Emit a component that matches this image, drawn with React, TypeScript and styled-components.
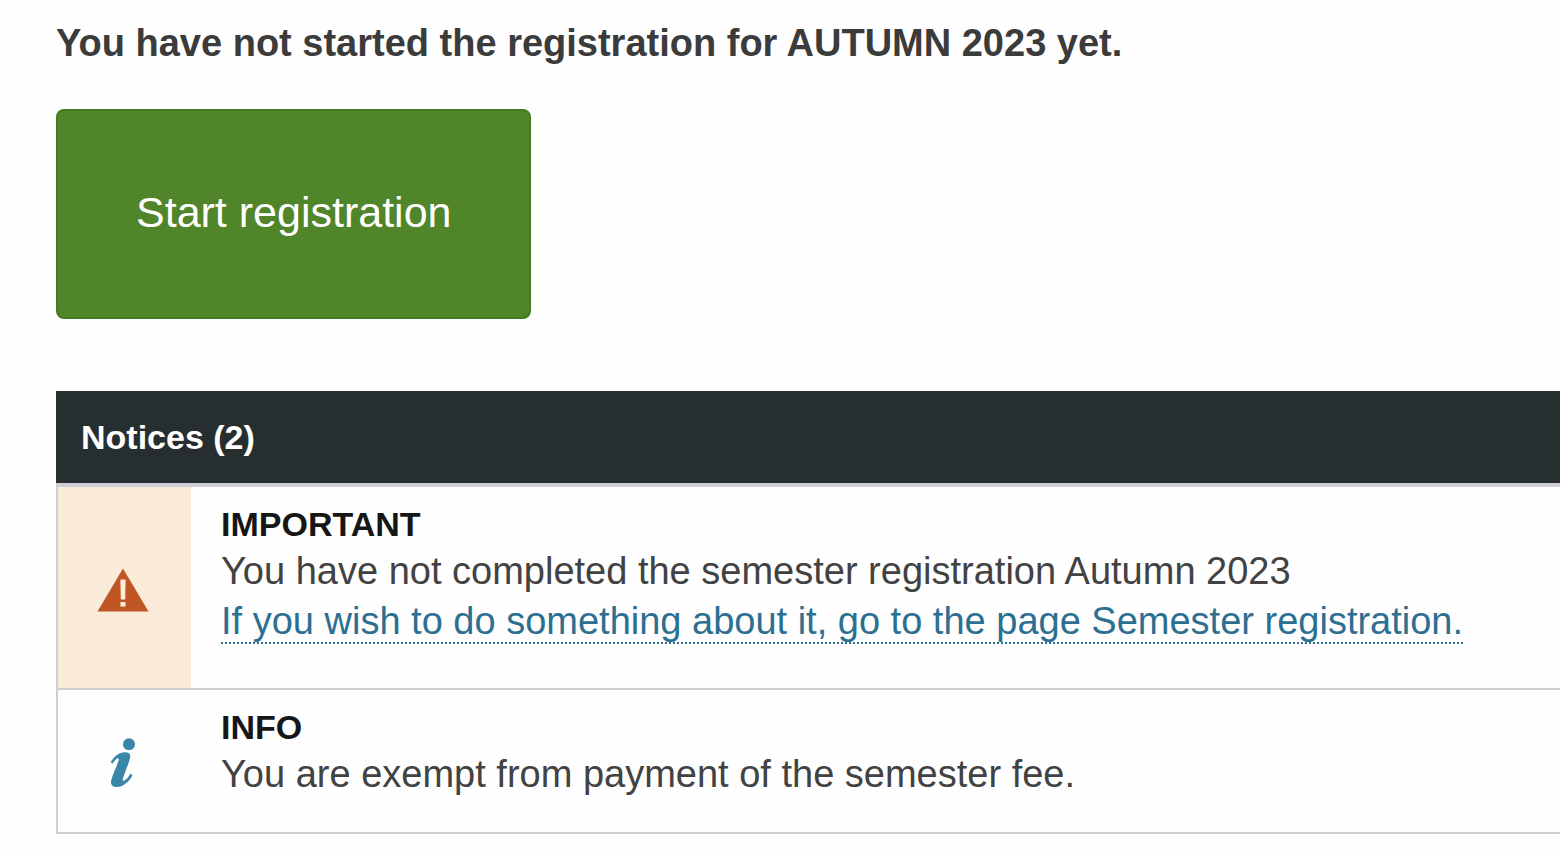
import React from "react";
import styled, { createGlobalStyle } from "styled-components";

const GlobalStyle = createGlobalStyle`
  *, *::before, *::after { box-sizing: border-box; }
  body {
    margin: 0;
    background: #fefefe;
    color: #424243;
    font-family: "Liberation Sans", Arial, sans-serif;
  }
`;

const Page = styled.main`
  padding: 18px 0 16px 56px;
`;

const Status = styled.h1`
  margin: 0 0 41px;
  font-size: 38px;
  line-height: 50px;
  font-weight: 700;
  color: #3b3b3c;
`;

const StartButton = styled.button`
  display: block;
  margin: 0 0 72px;
  padding: 76px 78px 80px;
  border: 2px solid #437b20;
  border-radius: 8px;
  background: #50852a;
  color: #ffffff;
  font-family: inherit;
  font-size: 43px;
  line-height: 50px;
  cursor: pointer;
`;

const NoticesTitle = styled.h2`
  margin: 0;
  padding: 21px 25px;
  background: #272e30;
  color: #ffffff;
  font-size: 34px;
  line-height: 50px;
  font-weight: 700;
`;

const NoticeList = styled.ul`
  margin: 0;
  padding: 0;
  list-style: none;
  border-top: 4px solid #cdced6;
  border-left: 2px solid #cdced6;
`;

const Notice = styled.li`
  display: flex;
  border-bottom: 2px solid #cdced6;
`;

const IconCell = styled.div<{ $tint?: string }>`
  display: flex;
  flex: 0 0 133px;
  align-items: center;
  justify-content: center;
  padding: 4px 3px 0 0;
  background: ${({ $tint }) => $tint ?? "transparent"};
`;

const NoticeBody = styled.div`
  flex: 1;
  min-width: 0;
  padding: 15px 30px 33px;
`;

const Level = styled.h3`
  margin: 0;
  font-size: 34px;
  line-height: 44px;
  font-weight: 700;
  color: #161617;
`;

const Message = styled.p`
  margin: 0;
  font-size: 38px;
  line-height: 50px;
`;

const Action = styled(Message)`
  margin-bottom: 9px;
`;

const NoticeLink = styled.a`
  color: #2d6f91;
  text-decoration: none;
  border-bottom: 2px dotted #2d6f91;
`;

const WarningIcon = () => (
  <svg width="52" height="44" viewBox="0 0 52 44" role="img" aria-label="Warning">
    <path d="M26 0.5 L51.5 43.5 H0.5 Z" fill="#c05526" />
    <path d="M23.4 11.5 H28.6 L28.2 31.5 H23.8 Z" fill="#fbebd9" />
    <rect x="23.5" y="34" width="5" height="4.6" fill="#fbebd9" />
  </svg>
);

const InfoIcon = () => (
  <svg width="26" height="50" viewBox="0 0 26 50" role="img" aria-label="Information">
    <circle cx="19" cy="6.2" r="6" fill="#3a86a8" />
    <path
      d="M0.6 24.2 C4.5 17.5 9.5 14.6 14.5 14.2 C19 14 21 16.2 20 20.2 C18.4 26.8 14.6 34.5 12.9 40.6 C12.3 42.9 13.4 43.4 15.2 42.1 C17.4 40.6 19 38.4 20.4 35.8 L22.6 37.2 C18.8 43.8 13.2 49 6.8 49 C2.4 49 0.4 46.6 1.2 42.6 C2.6 36.2 6.8 28.6 8.6 22.4 C9.2 20.2 8.2 19.6 6.6 20.8 C5.2 22 3.8 23.8 2.6 25.4 Z"
      fill="#3a86a8"
    />
  </svg>
);

export default function App() {
  return (
    <>
      <GlobalStyle />
      <Page>
        <Status>You have not started the registration for AUTUMN 2023 yet.</Status>
        <StartButton type="button">Start registration</StartButton>
        <section aria-labelledby="notices-title">
          <NoticesTitle id="notices-title">Notices (2)</NoticesTitle>
          <NoticeList>
            <Notice>
              <IconCell $tint="#fbebd9">
                <WarningIcon />
              </IconCell>
              <NoticeBody>
                <Level>IMPORTANT</Level>
                <Message>You have not completed the semester registration Autumn 2023</Message>
                <Action>
                  <NoticeLink href="#semester-registration">
                    If you wish to do something about it, go to the page Semester registration.
                  </NoticeLink>
                </Action>
              </NoticeBody>
            </Notice>
            <Notice>
              <IconCell>
                <InfoIcon />
              </IconCell>
              <NoticeBody>
                <Level>INFO</Level>
                <Message>You are exempt from payment of the semester fee.</Message>
              </NoticeBody>
            </Notice>
          </NoticeList>
        </section>
      </Page>
    </>
  );
}
